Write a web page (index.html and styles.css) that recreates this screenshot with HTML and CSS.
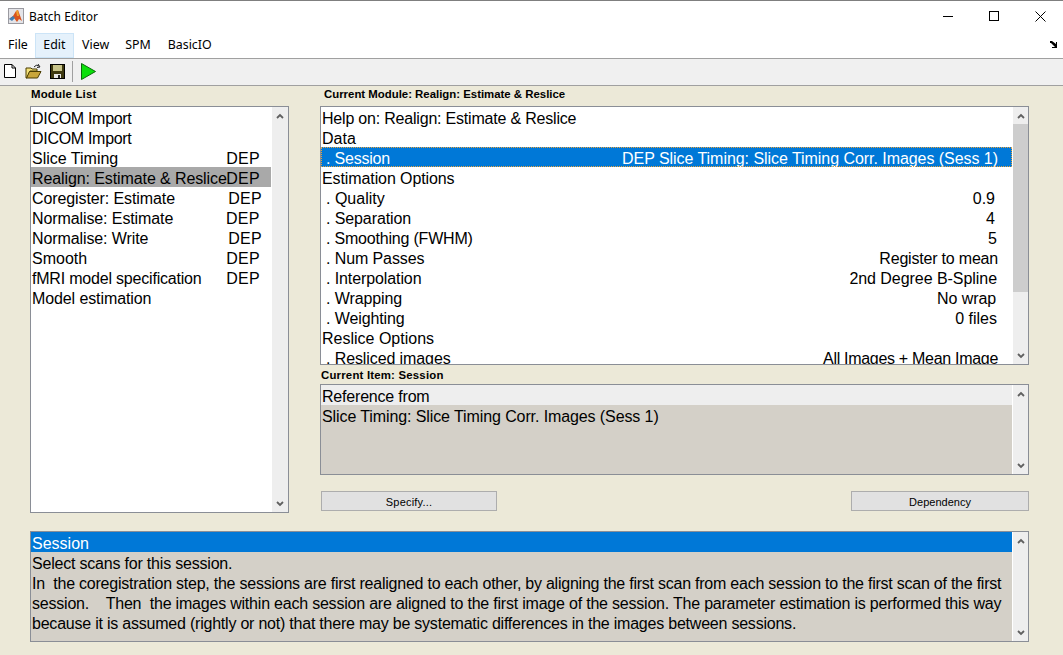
FILE: index.html
```html
<!DOCTYPE html>
<html lang="en">
<head>
    <meta charset="utf-8">
    <title>Batch Editor</title>
    <link rel="stylesheet" href="styles.css">
</head>
<body>
    <svg class="defs" width="0" height="0">
        <symbol id="up" viewBox="0 0 8 6"><path d="M1 5 L4 2 L7 5" fill="none" stroke="#606060" stroke-width="1.8"/></symbol>
        <symbol id="down" viewBox="0 0 8 6"><path d="M1 1 L4 4 L7 1" fill="none" stroke="#606060" stroke-width="1.8"/></symbol>
    </svg>

    <div id="titlebar">
        <svg class="appicon" width="16" height="16" viewBox="0 0 16 16">
            <rect x="0.5" y="0.5" width="15" height="15" fill="#e4e4e8" stroke="#9a9aa0"/>
            <path d="M1 11 L5 8 L8 3 L10 2 L14 13 L11 11 L9 14 L6 10 Z" fill="#d9541e"/>
            <path d="M1 11 L5 8 L7 10 L4 13 Z" fill="#3f7fb5"/>
            <path d="M8 3 L10 2 L11 8 L9 8 Z" fill="#f0a030"/>
        </svg>
        <span class="wintitle">Batch Editor</span>
        <div class="wincontrols">
            <div class="winbtn">
                <svg width="11" height="11" viewBox="0 0 11 11"><path d="M0 5.5 H10" stroke="#000"/></svg>
            </div>
            <div class="winbtn">
                <svg width="11" height="11" viewBox="0 0 11 11"><rect x="0.5" y="0.5" width="9" height="9" fill="none" stroke="#000"/></svg>
            </div>
            <div class="winbtn">
                <svg width="11" height="11" viewBox="0 0 11 11"><path d="M0.5 0.5 L10.5 10.5 M10.5 0.5 L0.5 10.5" stroke="#000"/></svg>
            </div>
        </div>
    </div>

    <div id="menubar">
        <span class="menu">File</span>
        <span class="menu hover">Edit</span>
        <span class="menu">View</span>
        <span class="menu">SPM</span>
        <span class="menu">BasicIO</span>
        <svg class="dock" width="8" height="7" viewBox="0 0 8 7"><path d="M0 0 H2 L6 3 V1 H7 V7 H2 V6 H5 L1 2 H0 Z" fill="#000"/></svg>
    </div>

    <div id="toolbar">
        <svg class="tool" width="13" height="15" viewBox="0 0 13 15"><path d="M0.5 0.5 H8 L11.5 4 V13.5 H0.5 Z" fill="#fff" stroke="#000"/><path d="M8 0.5 V4 H11.5" fill="none" stroke="#000"/></svg>
        <svg class="tool" width="17" height="15" viewBox="0 0 17 15"><path d="M1 4 H6 L7 5 H12 V7 H5 L2 14 H1 Z" fill="#f4e27a" stroke="#4a3c00"/><path d="M1.5 14 L4.5 7.5 H16 L12.5 14 Z" fill="#c9a63a" stroke="#4a3c00"/><path d="M9 3 Q11 0 14 2 M13 0 L15 3 L12 3.5" fill="none" stroke="#222"/></svg>
        <svg class="tool save" width="15" height="15" viewBox="0 0 15 15"><rect x="0.5" y="0.5" width="14" height="14" fill="#3f3a10" stroke="#000"/><rect x="3" y="1" width="9" height="6" fill="#c8c48a"/><rect x="4" y="10" width="7" height="4" fill="#e8e8e8"/><rect x="8" y="11" width="2" height="3" fill="#222"/></svg>
        <span class="toolsep"></span>
        <svg class="tool" width="15" height="17" viewBox="0 0 15 17"><path d="M0.5 0.5 L14.5 8.5 L0.5 16.5 Z" fill="#0be00b" stroke="#0a6a0a"/></svg>
    </div>

    <div id="main">
        <div class="columns">
            <div class="col">
                <div class="label left-label">Module List</div>
                <div class="box modules">
                    <div class="rows">
                        <div class="row ls3">DICOM Import</div>
                        <div class="row ls3">DICOM Import</div>
                        <div class="row"><span class="name">Slice Timing</span><span class="dep">DEP</span></div>
                        <div class="row current"><span class="name ls1">Realign: Estimate &amp; Reslice</span><span class="dep">DEP</span></div>
                        <div class="row"><span class="name ls1">Coregister: Estimate</span><span class="dep far">DEP</span></div>
                        <div class="row"><span class="name ls1">Normalise: Estimate</span><span class="dep near">DEP</span></div>
                        <div class="row"><span class="name ls1">Normalise: Write</span><span class="dep far">DEP</span></div>
                        <div class="row"><span class="name">Smooth</span><span class="dep">DEP</span></div>
                        <div class="row"><span class="name ls2">fMRI model specification</span><span class="dep">DEP</span></div>
                        <div class="row ls1">Model estimation</div>
                    </div>
                    <div class="scroll wide">
                        <div class="arrow"><svg width="8" height="6"><use href="#up"/></svg></div>
                        <div class="track"></div>
                        <div class="arrow"><svg width="8" height="6"><use href="#down"/></svg></div>
                    </div>
                </div>
            </div>

            <div class="col">
                <div class="label right-label">Current Module: Realign: Estimate &amp; Reslice</div>
                <div class="box settings">
                    <div class="rows">
                        <div class="row ls2">Help on: Realign: Estimate &amp; Reslice</div>
                        <div class="row">Data</div>
                        <div class="row sub selected"><span class="ls2">. Session</span><span class="val ls05">DEP Slice Timing: Slice Timing Corr. Images (Sess 1)</span></div>
                        <div class="row ls1">Estimation Options</div>
                        <div class="row sub"><span>. Quality</span><span class="val in3">0.9</span></div>
                        <div class="row sub"><span class="ls1">. Separation</span><span class="val in3">4</span></div>
                        <div class="row sub"><span class="ls2">. Smoothing (FWHM)</span><span class="val in1">5</span></div>
                        <div class="row sub"><span class="ls1">. Num Passes</span><span class="val ls2">Register to mean</span></div>
                        <div class="row sub"><span class="ls1">. Interpolation</span><span class="val in1 ls05">2nd Degree B-Spline</span></div>
                        <div class="row sub"><span class="ls1">. Wrapping</span><span class="val in2 ls1">No wrap</span></div>
                        <div class="row sub"><span class="ls1">. Weighting</span><span class="val in1">0 files</span></div>
                        <div class="row">Reslice Options</div>
                        <div class="row sub"><span class="ls1">. Resliced images</span><span class="val ls3">All Images + Mean Image</span></div>
                    </div>
                    <div class="scroll">
                        <div class="arrow"><svg width="8" height="6"><use href="#up"/></svg></div>
                        <div class="thumb"></div>
                        <div class="track"></div>
                        <div class="arrow"><svg width="8" height="6"><use href="#down"/></svg></div>
                    </div>
                </div>

                <div class="label item-label">Current Item: Session</div>
                <div class="box item">
                    <div class="rows grey">
                        <div class="row pale ls2">Reference from</div>
                        <div class="row ls1">Slice Timing: Slice Timing Corr. Images (Sess 1)</div>
                    </div>
                    <div class="scroll">
                        <div class="arrow"><svg width="8" height="6"><use href="#up"/></svg></div>
                        <div class="track"></div>
                        <div class="arrow"><svg width="8" height="6"><use href="#down"/></svg></div>
                    </div>
                </div>

                <div class="buttons">
                    <div class="btn specify">Specify...</div>
                    <div class="btn dependency">Dependency</div>
                </div>
            </div>
        </div>

        <div class="box help">
            <div class="rows grey">
                <div class="row blue">Session</div>
                <div class="row ls2">Select scans for this session.</div>
                <div class="row help-a">In  the coregistration step, the sessions are first realigned to each other, by aligning the first scan from each session to the first scan of the first</div>
                <div class="row help-b">session.    Then  the images within each session are aligned to the first image of the session. The parameter estimation is performed this way</div>
                <div class="row help-c">because it is assumed (rightly or not) that there may be systematic differences in the images between sessions.</div>
            </div>
            <div class="scroll">
                <div class="arrow"><svg width="8" height="6"><use href="#up"/></svg></div>
                <div class="track"></div>
                <div class="arrow"><svg width="8" height="6"><use href="#down"/></svg></div>
            </div>
        </div>
    </div>
</body>
</html>
```

FILE: styles.css
```css
html, body {
    height: 100%;
    margin: 0;
    padding: 0;
    overflow: hidden;
}

body {
    background-color: #ece9d8;
    font-family: "Liberation Sans", Arial, sans-serif;
    font-size: 16px;
    color: #000;
}

.defs {
    position: absolute;
}

/* window chrome */

#titlebar {
    display: flex;
    align-items: center;
    box-sizing: border-box;
    height: 33px;
    padding-bottom: 2px;
    background: #fff;
    border-top: 1px solid #7f7f7f;
    font-family: "Noto Sans", sans-serif;
    font-size: 12px;
}

.appicon {
    margin-left: 8px;
    margin-right: 5px;
}

.wincontrols {
    display: flex;
    margin-left: auto;
    height: 100%;
}

.winbtn {
    display: flex;
    align-items: center;
    justify-content: center;
    width: 46px;
}

#menubar {
    display: flex;
    align-items: center;
    height: 25px;
    background: #fff;
    border-bottom: 1px solid #a0a0a0;
    font-family: "Noto Sans", sans-serif;
    font-size: 12.4px;
}

.menu {
    padding: 0 8px 2px 8px;
    line-height: 23px;
}

.menu:first-child {
    padding-right: 7px;
}

.menu:nth-child(4) {
    padding-right: 9px;
}

.menu.hover {
    background: #e5f1fb;
    box-shadow: inset 0 0 0 1px #cce4f7;
    padding: 0 8.5px 2px 8.5px;
}

.dock {
    margin-left: auto;
    margin-right: 5px;
    margin-bottom: 3px;
}

#toolbar {
    display: flex;
    align-items: center;
    height: 24px;
    padding-left: 4px;
    padding-bottom: 2px;
    background: #f0f0f0;
    border-bottom: 1px solid #a0a0a0;
}

.tool {
    margin-right: 8px;
}

.tool.save {
    margin-right: 7px;
}

.toolsep {
    width: 1px;
    height: 21px;
    background: #a0a0a0;
    margin-right: 8px;
}

/* main panel */

#main {
    padding-left: 30px;
    width: 999px;
}

.columns {
    display: grid;
    grid-template-columns: 259px 709px;
    column-gap: 31px;
}

.label {
    font-size: 11.4px;
    font-weight: bold;
    height: 20px;
    line-height: 17px;
}

.left-label {
    padding-left: 1px;
    letter-spacing: 0.2px;
}

.right-label {
    padding-left: 4px;
}

.item-label {
    height: 19px;
    line-height: 20px;
    padding-left: 1px;
    letter-spacing: 0.2px;
}

.box {
    display: flex;
    background: #fff;
    border: 1px solid #8a8e96;
    box-sizing: border-box;
    overflow: hidden;
}

.modules {
    height: 407px;
}

.settings {
    height: 259px;
}

.item {
    height: 91px;
}

.help {
    height: 111px;
    margin-top: 18px;
    width: 999px;
}

.rows {
    flex: 1;
    min-width: 0;
    margin-right: 1px;
}

.grey {
    background: #d4d0c8;
}

.row {
    display: flex;
    justify-content: space-between;
    height: 20px;
    line-height: 24px;
    padding-left: 1px;
    white-space: pre;
}

/* the reference text runs a little narrower than Liberation Sans here */
.ls05 {
    letter-spacing: -0.05px;
}

.ls1 {
    letter-spacing: -0.1px;
}

.ls2 {
    letter-spacing: -0.2px;
}

.ls3 {
    letter-spacing: -0.3px;
}

.help-a {
    letter-spacing: -0.235px;
}

.help-b {
    letter-spacing: -0.21px;
}

.help-c {
    letter-spacing: -0.22px;
}

.name {
    width: 194px;
    flex-shrink: 0;
}

.dep {
    margin-right: 11px;
    letter-spacing: 0.3px;
}

.dep.far {
    margin-right: 9px;
}

.dep.near {
    margin-right: 12px;
}

.current {
    background: #a9a9a9;
}

.sub {
    padding-left: 5px;
    padding-right: 14px;
}

.val.in1 {
    margin-right: 1px;
}

.val.in2 {
    margin-right: 2px;
}

.val.in3 {
    margin-right: 3px;
}

.selected {
    background: #0078d7;
    color: #fff;
    outline: 1px dotted #e8a33d;
    outline-offset: -1px;
}

.blue {
    background: #0078d7;
    color: #fff;
}

.pale {
    background: #eee;
}

/* scrollbars */

.scroll {
    display: flex;
    flex-direction: column;
    flex-shrink: 0;
    width: 15px;
    background: #eee;
}

.scroll.wide {
    width: 16px;
}

.arrow {
    display: flex;
    align-items: center;
    justify-content: center;
    height: 17px;
    flex-shrink: 0;
}

.thumb {
    height: 168px;
    background: #cdcdcd;
}

.track {
    flex: 1;
}

/* buttons */

.buttons {
    display: flex;
    justify-content: space-between;
    margin-top: 16px;
    padding-left: 1px;
}

.btn {
    box-sizing: border-box;
    height: 20px;
    line-height: 20px;
    background: #e1e1e1;
    border: 1px solid #adadad;
    font-size: 11px;
    text-align: center;
}

.specify {
    width: 176px;
    letter-spacing: 0.2px;
}

.dependency {
    width: 178px;
}
```
